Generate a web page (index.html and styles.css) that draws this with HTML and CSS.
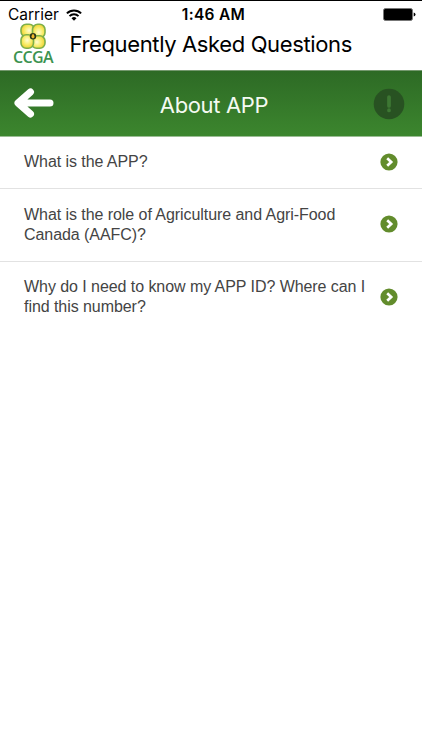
FILE: index.html
```html
<!DOCTYPE html>
<html lang="en">
<head>
<meta charset="utf-8">
<title>Frequently Asked Questions</title>
<link rel="stylesheet" href="styles.css">
</head>
<body>
<header class="top">
  <div class="status">
    <div class="carrier"><span>Carrier</span>
      <svg class="wifi" width="16" height="12" viewBox="0 0 16 12"><g fill="none" stroke="#000" stroke-width="2"><path d="M.9 4.4a10 10 0 0 1 14.2 0"/><path d="M3.5 7.1a6.4 6.4 0 0 1 9 0"/></g><path d="M5.5 9.2a3.6 3.6 0 0 1 5 0L8 11.8z"/></svg>
    </div>
    <span class="clock">1:46 AM</span>
    <svg class="battery" width="33" height="14" viewBox="0 0 33 14"><rect x=".5" y=".5" width="29" height="12" rx="2" fill="#000" stroke="#777"/><rect x="1.5" y="1.5" width="27" height="10" rx="1"/><path d="M30.7 4.5q1.8.5 1.8 2t-1.8 2z"/></svg>
  </div>
  <div class="brand">
    <div class="logo">
      <svg width="26" height="27" viewBox="0 0 26 27">
        <defs><radialGradient id="petal" cx=".6" cy=".5" r=".65"><stop offset="0" stop-color="#fffcd0"/><stop offset=".5" stop-color="#f9ed6c"/><stop offset="1" stop-color="#eccb28"/></radialGradient></defs>
        <g fill="url(#petal)" stroke="#7db04a" stroke-width="1.600">
          <rect x="1" y="1.300" width="13.500" height="12.500" rx="5.200"/>
          <rect x="1" y="1.300" width="13.500" height="12.500" rx="5.200" transform="rotate(90 13 13.300)"/>
          <rect x="1" y="1.300" width="13.500" height="12.500" rx="5.200" transform="rotate(180 13 13.300)"/>
          <rect x="1" y="1.300" width="13.500" height="12.500" rx="5.200" transform="rotate(270 13 13.300)"/>
        </g>
        <circle cx="13" cy="13.300" r="3.200" fill="#29351b"/><path d="M13 10.600q-3.200 4 0 5q3.200-1 0-5z" fill="#f2b72c"/>
      </svg>
      <span class="logo-name">CCGA</span>
    </div>
    <h1>Frequently Asked Questions</h1>
  </div>
</header>
<nav class="bar">
  <svg class="back" width="40" height="30" viewBox="0 0 40 30"><path d="M16.500 4L4 15l12.500 11M5 15h31" fill="none" stroke="#fff" stroke-width="7" stroke-linecap="round" stroke-linejoin="round"/></svg>
  <h2>About APP</h2>
  <svg class="alert" width="32" height="32" viewBox="0 0 32 32"><circle cx="16" cy="16" r="15.300" fill="#285222"/><path d="M16 9v9M16 22.200v.3" stroke="#3d7733" stroke-width="3.700" stroke-linecap="round"/></svg>
</nav>
<ul class="list">
  <li><span>What is the APP?</span><svg class="go" width="18" height="18" viewBox="0 0 18 18"><circle cx="9" cy="9" r="8.600"/><path d="M7.200 5.200l4 3.800-4 3.800"/></svg></li>
  <li><span>What is the role of Agriculture and Agri-Food<br>Canada (AAFC)?</span><svg class="go" width="18" height="18" viewBox="0 0 18 18"><circle cx="9" cy="9" r="8.600"/><path d="M7.200 5.200l4 3.800-4 3.800"/></svg></li>
  <li><span>Why do I need to know my APP ID? Where can I<br>find this number?</span><svg class="go" width="18" height="18" viewBox="0 0 18 18"><circle cx="9" cy="9" r="8.600"/><path d="M7.200 5.200l4 3.800-4 3.800"/></svg></li>
</ul>
</body>
</html>
```
FILE: styles.css
```css
* { box-sizing: border-box; }
html { background: #fff; }
body {
  margin: 0;
  height: 750px;
  overflow: hidden;
  border-top: 1px solid #000;
  font-family: Inter, "Liberation Sans", sans-serif;
  color: #000;
}
h1, h2, ul { margin: 0; padding: 0; font-weight: 400; }
svg { display: block; flex: none; }
.top { height: 69px; }
.status {
  display: grid;
  grid-template-columns: 1fr auto 1fr;
  align-items: center;
  height: 22px;
  padding: 5px 6px 0 8px;
}
.carrier {
  display: flex;
  align-items: center;
  gap: 7px;
  font-size: 15.500px;
  line-height: 18px;
}
.clock { margin-left: 3px; font-size: 15.500px; line-height: 18px; font-weight: 600; letter-spacing: .3px; }
.battery { justify-self: end; }
.brand { display: flex; height: 47px; padding-left: 12px; }
.logo { width: 42px; display: flex; flex-direction: column; align-items: center; }
.logo-name {
  font: 600 16px/15px "Open Sans", sans-serif;
  color: #3c9350;
  letter-spacing: -.6px;
}
.brand h1 { margin: 8px 0 0 15.500px; font-size: 22px; line-height: 26px; letter-spacing: -.37px; white-space: nowrap; }
.bar {
  display: flex;
  align-items: center;
  justify-content: space-between;
  height: 67px;
  padding: 0 17px 0 14px;
  background: linear-gradient(#2d6a25, #3c862e);
  border-top: 1px solid #74986e;
  border-bottom: 1px solid #9bbd94;
}
.bar h2 { padding: 2px 0 0 1px; font-size: 22px; line-height: 26px; letter-spacing: -.35px; color: #f4faf2; }
.back { position: relative; top: -1px; }
.list { list-style: none; }
.list li {
  display: flex;
  align-items: center;
  justify-content: space-between;
  height: 72.500px;
  padding: 0 24px 1px;
  border-bottom: 1.500px solid #e2e2e2;
  font: 16px/20px "Liberation Sans", sans-serif;
  letter-spacing: -.06px;
  color: #444;
}
.list li:first-child { height: 52px; }
.list li:nth-child(2) span { padding-top: 1px; }
.list li:last-child { padding-bottom: 2px; border-bottom: 0; }
.list span { white-space: nowrap; }
.go { fill: #628c2c; }
.go path { fill: none; stroke: #fff; stroke-width: 2.700; }
```
